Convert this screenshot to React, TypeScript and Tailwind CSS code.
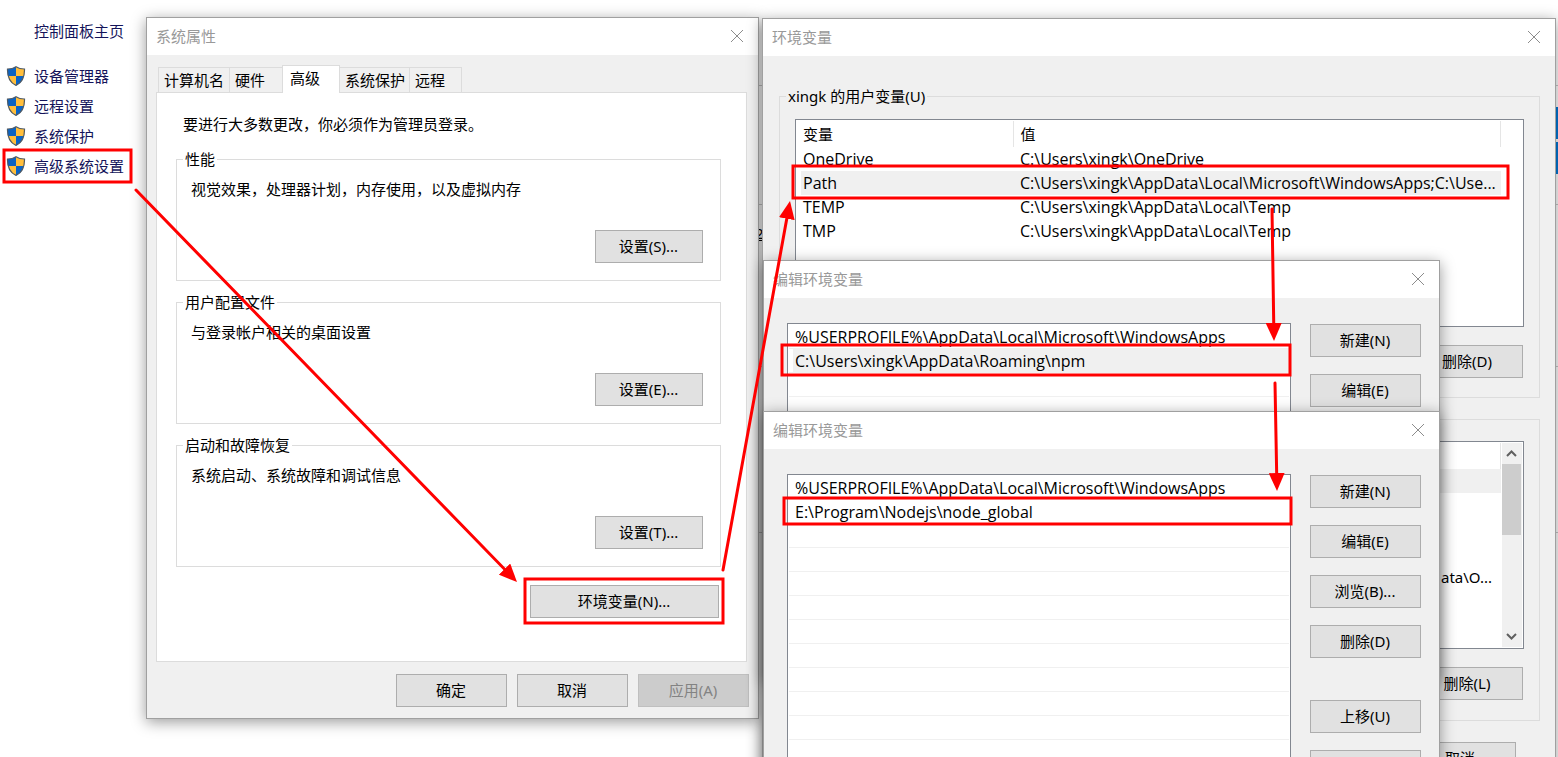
import React from 'react';
import clsx from 'clsx';

interface WindowProps {
  title: string;
  className: string;
  children: React.ReactNode;
}

interface Variable {
  name: string;
  value: string;
}

const sideLinks = ['设备管理器', '远程设置', '系统保护', '高级系统设置'];

const tabs = [
  { label: '计算机名', width: 'w-[72px]' },
  { label: '硬件', width: 'w-[54px]' },
  { label: '高级', width: 'w-[58px]' },
  { label: '系统保护', width: 'w-[71px]' },
  { label: '远程', width: 'w-[53px]' },
];

const groups = [
  { title: '性能', text: '视觉效果，处理器计划，内存使用，以及虚拟内存', button: '设置(S)...' },
  { title: '用户配置文件', text: '与登录帐户相关的桌面设置', button: '设置(E)...' },
  { title: '启动和故障恢复', text: '系统启动、系统故障和调试信息', button: '设置(T)...' },
];

const userVariables: Variable[] = [
  { name: 'OneDrive', value: 'C:\\Users\\xingk\\OneDrive' },
  { name: 'Path', value: 'C:\\Users\\xingk\\AppData\\Local\\Microsoft\\WindowsApps;C:\\Use...' },
  { name: 'TEMP', value: 'C:\\Users\\xingk\\AppData\\Local\\Temp' },
  { name: 'TMP', value: 'C:\\Users\\xingk\\AppData\\Local\\Temp' },
];

const highlights = [
  { x: 4, y: 150, width: 127, height: 32 },
  { x: 525, y: 579, width: 198, height: 44 },
  { x: 793, y: 166, width: 715, height: 32 },
  { x: 782, y: 345, width: 508, height: 30 },
  { x: 784, y: 498, width: 507, height: 26 },
];

const arrows = [
  { x1: 136, y1: 190, x2: 517, y2: 582 },
  { x1: 723, y1: 570, x2: 790, y2: 201 },
  { x1: 1272, y1: 209, x2: 1274, y2: 341 },
  { x1: 1275, y1: 383, x2: 1277, y2: 491 },
];

function Shield() {
  return (
    <svg viewBox="0 0 20 20" className="h-5 w-5 shrink-0" aria-hidden="true">
      <defs>
        <clipPath id="shield">
          <path d="M10 .7C7.500 2.400 4.500 3 1.500 3C1.300 10 2.500 16 10 19.400C17.500 16 18.700 10 18.500 3C15.500 3 12.500 2.400 10 .7Z" />
        </clipPath>
      </defs>
      <g clipPath="url(#shield)">
        <path fill="#0a63c4" d="M0 0h10v10H0zM10 10h10v10H10z" />
        <path fill="#ffbe3c" d="M10 0h10v10H10zM0 10h10v10H0z" />
      </g>
      <path
        d="M10 .7C7.500 2.400 4.500 3 1.500 3C1.300 10 2.500 16 10 19.400C17.500 16 18.700 10 18.500 3C15.500 3 12.500 2.400 10 .7Z"
        fill="none"
        stroke="#505a64"
        strokeWidth="1.200"
      />
    </svg>
  );
}

function Window({ title, className, children }: WindowProps) {
  return (
    <section
      aria-label={title}
      className={clsx('absolute border border-[#a0a0a0] bg-[#f0f0f0] shadow-[0_3px_14px_rgba(0,0,0,0.4)]', className)}
    >
      <header className="flex h-[37px] items-center justify-between bg-white pr-[14px] pb-[2px] pl-[9px] text-[#999]">
        <h2>{title}</h2>
        <button type="button" aria-label="关闭">
          <svg viewBox="0 0 14 14" className="size-[14px]" stroke="#8c8c8c" fill="none" aria-hidden="true">
            <path d="M1 1L13 13M13 1L1 13" />
          </svg>
        </button>
      </header>
      {children}
    </section>
  );
}

function Button({ className = 'w-[111px]', disabled, children }: { className?: string; disabled?: boolean; children: React.ReactNode }) {
  return (
    <button
      type="button"
      disabled={disabled}
      className={clsx(
        'h-[33px] shrink-0 border pr-px pb-[2px] text-center whitespace-nowrap',
        disabled ? 'border-[#bfbfbf] bg-[#ccc] text-[#838383]' : 'border-[#adadad] bg-[#e1e1e1]',
        className,
      )}
    >
      {children}
    </button>
  );
}

function SystemProperties() {
  return (
    <Window title="系统属性" className="top-[17px] left-[146px] w-[613px]">
      <div className="px-[9px] pt-[10px] pb-[11px]">
        <div role="tablist" className="flex h-[27px] items-end pl-[2px]">
          {tabs.map((tab) => {
            const active = tab.label === '高级';
            return (
              <button
                key={tab.label}
                type="button"
                role="tab"
                aria-selected={active}
                className={clsx(
                  'border border-b-0 border-[#dcdcdc] text-left whitespace-nowrap not-first:-ml-px',
                  active ? 'relative -mb-px h-7 bg-white pb-1 pl-[7px]' : 'h-[25px] pl-[5px]',
                  tab.width,
                )}
              >
                {tab.label}
              </button>
            );
          })}
        </div>
        <div className="mr-[2px] border border-[#dcdcdc] bg-white pt-[21px] pr-[25px] pb-[43px] pl-[19px]">
          <p className="pl-[7px]">要进行大多数更改，你必须作为管理员登录。</p>
          <div className="mt-[15px] flex flex-col gap-[11px]">
            {groups.map((group) => (
              <fieldset key={group.title} className="h-[132px] border border-[#dcdcdc] pr-[17px] pl-[14px]">
                <legend className="-ml-2 px-[2px]">{group.title}</legend>
                <p className="mt-[10px]">{group.text}</p>
                <div className="mt-[31px] flex justify-end">
                  <Button className="w-[108px]">{group.button}</Button>
                </div>
              </fieldset>
            ))}
          </div>
          <div className="mt-[18px] flex justify-end pr-[2px]">
            <Button className="w-[189px]">环境变量(N)...</Button>
          </div>
        </div>
        <div className="mt-3 flex justify-end gap-[10px]">
          <Button>确定</Button>
          <Button>取消</Button>
          <Button disabled>应用(A)</Button>
        </div>
      </div>
    </Window>
  );
}

function EnvironmentVariables() {
  return (
    <Window title="环境变量" className="top-[18px] left-[762px] w-[794px]">
      <div className="pt-[30px] pr-[15px] pb-4 pl-4">
        <fieldset className="h-[312px] border border-[#dcdcdc] px-[15px]">
          <legend className="-ml-[9px] px-[2px]">xingk 的用户变量(U)</legend>
          <div className="mt-[13px] h-[208px] border border-[#828790] bg-white pt-px pl-[5px]">
            <table className="w-[700px] table-fixed text-left">
              <thead>
                <tr className="h-[26px]">
                  <th className="w-[212px] border-r border-[#e5e5e5] pl-[2px] font-normal">变量</th>
                  <th className="border-r border-[#e5e5e5] pl-[7px] font-normal">值</th>
                </tr>
              </thead>
              <tbody className="font-['Open_Sans',sans-serif] text-[16px] leading-5">
                {userVariables.map((variable) => (
                  <tr key={variable.name} className={clsx('h-6', variable.name === 'Path' && 'bg-[#f0f0f0]')}>
                    <td className="pl-[2px]">{variable.name}</td>
                    <td className="pl-[7px] whitespace-nowrap">{variable.value}</td>
                  </tr>
                ))}
              </tbody>
            </table>
          </div>
          <div className="mt-[18px] flex justify-end pr-px">
            <Button>删除(D)</Button>
          </div>
        </fieldset>

        <div className="mt-[21px] h-[302px] border border-[#dcdcdc] px-[15px] pt-[21px]">
          <div className="flex h-[208px] border border-[#828790] bg-white p-px pl-[5px]">
            <div className="flex-1">
              <div className="h-[26px] border-r border-[#e5e5e5]" />
              <div className="h-6 bg-[#f0f0f0]" />
              <div className="mt-[72px] pr-[9px] text-right leading-6">ata\O...</div>
            </div>
            <div className="ml-px flex w-5 flex-col items-center bg-[#f0f0f0]">
              <svg viewBox="0 0 20 21" className="h-[21px] w-5" fill="none" stroke="#606060" strokeWidth="2" aria-hidden="true">
                <path d="M5 13L9.500 8.500L14 13" />
              </svg>
              <div className="h-[71px] w-[19px] self-start bg-[#cdcdcd]" />
              <svg viewBox="0 0 20 21" className="mt-auto h-[21px] w-5" fill="none" stroke="#606060" strokeWidth="2" aria-hidden="true">
                <path d="M5 8L9.500 12.500L14 8" />
              </svg>
            </div>
          </div>
          <div className="mt-[18px] flex justify-end pr-px">
            <Button>删除(L)</Button>
          </div>
        </div>
        <div className="mt-[21px] flex justify-end pr-6">
          <Button>取消</Button>
        </div>
      </div>
    </Window>
  );
}

function EditVariable({ paths, selected, className }: { paths: string[]; selected?: number; className: string }) {
  const rows = [...paths, ...Array(14 - paths.length).fill('')];

  return (
    <Window title="编辑环境变量" className={className}>
      <div className="flex gap-[19px] pt-[25px] pr-[18px] pb-4 pl-[23px]">
        <ul className="flex-1 border border-[#828790] bg-white p-px font-['Open_Sans',sans-serif] text-[16px] leading-6">
          {rows.map((path, i) => (
            <li key={i} className="h-6 border-b border-[#f0f0f0] pl-1">
              <div className={clsx('h-[23px] pl-[2px]', i === selected && 'bg-[#f0f0f0]')}>{path}</div>
            </li>
          ))}
        </ul>
        <div className="flex flex-col gap-[17px] pt-px">
          <Button>新建(N)</Button>
          <Button>编辑(E)</Button>
          <Button>浏览(B)...</Button>
          <Button>删除(D)</Button>
          <Button className="mt-[25px] w-[111px]">上移(U)</Button>
          <Button>下移(O)</Button>
        </div>
      </div>
    </Window>
  );
}

// Red frames and arrows that walk through the steps
function Annotations() {
  return (
    <svg className="pointer-events-none absolute top-0 left-0 h-[757px] w-[1558px]" fill="none" stroke="#f00" strokeWidth="3" aria-hidden="true">
      <defs>
        <marker id="head" markerUnits="userSpaceOnUse" markerWidth="18" markerHeight="16" refX="18" refY="8" orient="auto">
          <path d="M0 0L18 8L0 16Z" fill="#f00" stroke="none" />
        </marker>
      </defs>
      {highlights.map((box) => (
        <rect key={box.y} {...box} />
      ))}
      {arrows.map((arrow) => {
        // stop the shaft inside the head so the tip stays sharp
        const length = Math.hypot(arrow.x2 - arrow.x1, arrow.y2 - arrow.y1);
        const t = (length - 10) / length;
        return (
          <g key={arrow.x1}>
            <line
              x1={arrow.x1}
              y1={arrow.y1}
              x2={arrow.x1 + (arrow.x2 - arrow.x1) * t}
              y2={arrow.y1 + (arrow.y2 - arrow.y1) * t}
              strokeLinecap="round"
            />
            <line {...arrow} stroke="none" markerEnd="url(#head)" />
          </g>
        );
      })}
    </svg>
  );
}

export default function App() {
  return (
    <main className="relative h-screen overflow-hidden bg-white font-['Noto_Sans','Noto_Sans_CJK_SC',sans-serif] text-[15px] leading-5 text-black">
      <nav className="flex flex-col pt-[21px] pl-[6px] text-[#14145a]">
        <a href="#home" className="pl-7">控制面板主页</a>
        <ul className="mt-[25px] flex flex-col gap-[10px]">
          {sideLinks.map((link) => (
            <li key={link}>
              <a href="#settings" className="flex items-center gap-2">
                <Shield />
                {link}
              </a>
            </li>
          ))}
        </ul>
      </nav>

      {/* slivers of the page behind the dialogs */}
      <div className="absolute top-[85px] right-0 left-[758px] h-[120px] border-y border-[#c8c8c8]" />
      <div className="absolute top-[366px] right-0 left-[758px] h-[167px] border-y border-[#c8c8c8]" />
      <div className="absolute top-[107px] right-0 h-8 w-2 bg-[#0078d7]" />
      <div className="absolute top-[142px] right-0 h-8 w-2 bg-[#0078d7]" />
      <div className="absolute top-[223px] left-[755px] underline">2</div>

      <SystemProperties />
      <EnvironmentVariables />
      <EditVariable
        className="top-[260px] left-[763px] w-[677px]"
        paths={['%USERPROFILE%\\AppData\\Local\\Microsoft\\WindowsApps', 'C:\\Users\\xingk\\AppData\\Roaming\\npm']}
        selected={1}
      />
      <EditVariable
        className="top-[411px] left-[763px] w-[677px]"
        paths={['%USERPROFILE%\\AppData\\Local\\Microsoft\\WindowsApps', 'E:\\Program\\Nodejs\\node_global']}
      />
      <Annotations />
    </main>
  );
}
